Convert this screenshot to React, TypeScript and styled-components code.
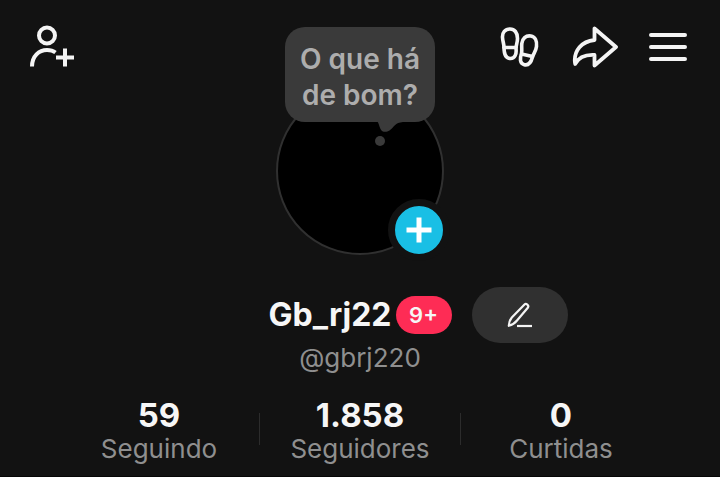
import React from "react";
import styled, { createGlobalStyle } from "styled-components";

const GlobalStyle = createGlobalStyle`
  * { box-sizing: border-box; }
  html { background: #121212; }
  body { margin: 0; background: #121212; color: #f6f6f6; font-family: Inter, "Noto Sans", sans-serif; }
  button { font: inherit; color: inherit; background: none; border: 0; padding: 0; cursor: pointer; }
  svg { display: block; }
`;

const Page = styled.main`
  display: flex;
  flex-direction: column;
  min-height: 100vh;
  border-bottom: 1px solid #060606;
`;

const Header = styled.header`
  display: grid;
  grid-template-columns: 1fr auto 1fr;
  align-items: start;
  padding: 23px 28px 0;
`;

const Actions = styled.nav<{ $end?: boolean }>`
  display: flex;
  gap: 26px;
  justify-content: ${(p) => (p.$end ? "flex-end" : "flex-start")};
`;

const IconButton = styled.button`
  width: 48px;
  height: 48px;
`;

const Avatar = styled.div`
  position: relative;
  width: 168px;
  height: 168px;
  margin-top: 64px;
  border: 2px solid #303030;
  border-radius: 50%;
  background: #000;
`;

const Bubble = styled.button`
  && {
    position: absolute;
    left: 7px;
    top: -62px;
    width: 150px;
    height: 95px;
    padding-top: 4px;
    border-radius: 20px;
    background: #3a3a3a;
    color: #adadad;
    font-size: 28px;
    font-weight: 600;
    line-height: 36px;
    white-space: nowrap;
  }
`;

const BubbleTail = styled.svg`
  position: absolute;
  left: 88px;
  top: 94px;
`;

const AddButton = styled.button`
  && {
    position: absolute;
    right: -8px;
    bottom: -8px;
    width: 62px;
    height: 62px;
    border: 7px solid #121212;
    border-radius: 50%;
    background: #19bfe5;
  }
`;

const NameRow = styled.div`
  display: grid;
  grid-template-columns: 1fr auto 1fr;
  align-items: center;
  column-gap: 20px;
  margin-top: 32px;
`;

const NameGroup = styled.div`
  grid-column: 2;
  display: flex;
  align-items: center;
  gap: 4px;
`;

const Name = styled.h1`
  margin: 0;
  font-size: 32px;
  font-weight: 700;
  line-height: 40px;
`;

const Badge = styled.span`
  width: 56px;
  border-radius: 19px;
  background: #fe2c55;
  font-size: 22px;
  font-weight: 600;
  line-height: 38px;
  text-align: center;
`;

const EditButton = styled.button`
  && {
    display: grid;
    place-items: center;
    width: 96px;
    height: 56px;
    border-radius: 28px;
    background: #303030;
  }
`;

const Handle = styled.p`
  margin: 0;
  color: #8f8f8f;
  font-size: 26px;
  line-height: 30px;
  text-align: center;
`;

const Stats = styled.section`
  display: grid;
  grid-template-columns: 1fr 1px 1fr 1px 1fr;
  align-items: start;
  margin-top: 25px;
  padding: 0 59px;
`;

const Divider = styled.span`
  height: 32px;
  margin-top: 15px;
  background: #2c2c2c;
`;

const Stat = styled.button`
  display: flex;
  flex-direction: column;
  align-items: center;
`;

const StatValue = styled.strong`
  font-size: 33px;
  font-weight: 700;
  line-height: 34px;
`;

const StatLabel = styled.span`
  color: #8f8f8f;
  font-size: 26px;
  line-height: 34px;
`;

const stroke = {
  fill: "none",
  stroke: "#f4f4f4",
  strokeWidth: 4,
  strokeLinecap: "round" as const,
  strokeLinejoin: "round" as const,
};

const AddFriendIcon = () => (
  <svg width="48" height="48" viewBox="0 0 48 48" {...stroke} strokeLinecap="butt" aria-hidden="true">
    <circle cx="19" cy="12.5" r="8" />
    <path d="M4 43.500C4 33 11 27 19 27c3.500 0 6.500 1 8.500 2.500" />
    <path d="M37 25.500v18M28 34.500h18" />
  </svg>
);

const FootprintsIcon = () => (
  <svg width="48" height="48" viewBox="0 0 48 48" {...stroke} strokeWidth="3.6" aria-hidden="true">
    <path d="M14 6c-5 0-7.800 3.500-7.500 8.500.2 4 1.500 6 1.500 10 0 6 1.800 11 6.500 11 4.500 0 6.200-4.500 5.500-10 0-3.500 1.500-6 1.500-10C21.500 9.500 18.500 6 14 6z" />
    <path d="M8 24.500h12" />
    <path d="M34.800 13c-5-.8-8.500 2.800-9 7.500-.4 4 .4 6.500-.3 10-1.800 5-1.800 10 2.800 11.200 4.500 1 7-3 8.200-7.700 1-3.500 3.500-6 4-10.500.6-5.200-1.200-9.700-5.700-10.500z" />
    <path d="M25.500 31l11 2.500" />
  </svg>
);

const ShareIcon = () => (
  <svg width="48" height="48" viewBox="0 0 48 48" {...stroke} strokeWidth="3.800" aria-hidden="true">
    <path d="M24.500 5.500v11.500C11 18.500 4.500 28 4.800 37.800c0 1.200.200 2.200.400 3.200C8.500 34.500 15 31.500 24.500 32v10.500L46 24z" />
  </svg>
);

const MenuIcon = () => (
  <svg width="48" height="48" viewBox="0 0 48 48" {...stroke} aria-hidden="true">
    <path d="M7 12h34M7 24h34M7 36h34" />
  </svg>
);

const PlusIcon = () => (
  <svg width="48" height="48" viewBox="0 0 48 48" {...stroke} stroke="#fff" strokeWidth="5" strokeLinecap="butt" aria-hidden="true">
    <path d="M24 11.500v25M11.500 24h25" />
  </svg>
);

const PencilIcon = () => (
  <svg width="28" height="28" viewBox="0 0 28 28" {...stroke} strokeWidth="2.200" aria-hidden="true">
    <path d="M2.800 24.800c.2-3.500 1-6 3-8.300L18.500 3.500c1.600-1.500 4.800.9 3.500 3L11 19.500C8.800 22.300 6 24 2.800 24.800z" />
    <path d="M11 25h15" strokeLinecap="butt" />
  </svg>
);

const stats = [
  { value: "59", label: "Seguindo" },
  { value: "1.858", label: "Seguidores" },
  { value: "0", label: "Curtidas" },
];

export default function App() {
  return (
    <Page>
      <GlobalStyle />
      <Header>
        <Actions aria-label="Amigos">
          <IconButton aria-label="Adicionar amigos"><AddFriendIcon /></IconButton>
        </Actions>
        <Avatar>
          <Bubble>
            O que há<br />de bom?
            <BubbleTail width="34" height="28" viewBox="0 0 34 28" fill="#3a3a3a" aria-hidden="true">
              <path d="M4 0c2 2 2 5 3.500 8 1.500 3.500 6 3.500 9 1.500C21 6.500 22 1.500 30 1V0z" />
              <circle cx="7" cy="20" r="5" />
            </BubbleTail>
          </Bubble>
          <AddButton aria-label="Adicionar"><PlusIcon /></AddButton>
        </Avatar>
        <Actions $end aria-label="Perfil">
          <IconButton aria-label="Visitas ao perfil"><FootprintsIcon /></IconButton>
          <IconButton aria-label="Compartilhar"><ShareIcon /></IconButton>
          <IconButton aria-label="Menu"><MenuIcon /></IconButton>
        </Actions>
      </Header>
      <NameRow>
        <NameGroup>
          <Name>Gb_rj22</Name>
          <Badge>9+</Badge>
        </NameGroup>
        <EditButton aria-label="Editar perfil"><PencilIcon /></EditButton>
      </NameRow>
      <Handle>@gbrj220</Handle>
      <Stats>
        {stats.map((s, i) => (
          <React.Fragment key={s.label}>
            {i > 0 && <Divider />}
            <Stat>
              <StatValue>{s.value}</StatValue>
              <StatLabel>{s.label}</StatLabel>
            </Stat>
          </React.Fragment>
        ))}
      </Stats>
    </Page>
  );
}
